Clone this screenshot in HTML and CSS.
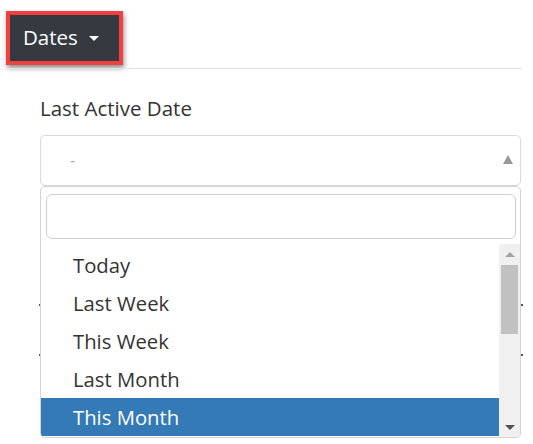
FILE: index.html
```html
<!DOCTYPE html>
<html>
<head>
<meta charset="utf-8">
<link rel="stylesheet" href="styles.css">
</head>
<body>
<div class="page">
  <div class="toolbar">
    <button class="dates-btn">Dates <span class="caret"></span></button>
  </div>
  <div class="divider"></div>
  <div class="field">
    <label class="field-label">Last Active Date</label>
    <div class="select-wrap">
      <div class="select">
        <span class="select-value">-</span>
        <span class="select-arrow"></span>
      </div>
      <div class="under">
        <div class="under-input"></div>
        <div class="under-row"><span class="tick"></span><span class="tick"></span></div>
        <div class="under-row"><span class="tick"></span><span class="tick"></span></div>
        <div class="under-bottom"><span class="vline"></span></div>
      </div>
      <div class="dropdown">
        <div class="search"><div class="search-input"></div></div>
        <div class="options">
          <ul class="list">
            <li class="opt">Today</li>
            <li class="opt">Last Week</li>
            <li class="opt">This Week</li>
            <li class="opt">Last Month</li>
            <li class="opt active">This Month</li>
          </ul>
          <div class="scrollbar">
            <span class="sb-up"></span>
            <span class="sb-thumb"></span>
            <span class="sb-fill"></span>
            <span class="sb-down"></span>
          </div>
        </div>
      </div>
    </div>
  </div>
</div>
</body>
</html>
```
FILE: styles.css
```css
* { box-sizing: border-box; }
html, body { margin: 0; padding: 0; background: #fff; }
body {
  font-family: "Open Sans", "Noto Sans", sans-serif;
  color: #333;
  width: 533px;
  height: 444px;
  overflow: hidden;
}
.page { padding: 11px 0 0 0; }
.toolbar { padding-left: 6px; height: 57px; }
.dates-btn {
  display: flex;
  align-items: center;
  width: 117px;
  height: 54px;
  border: 4px solid #f23f3f;
  background: #343a40;
  color: #fff;
  font-family: "Open Sans", sans-serif;
  font-size: 20.5px;
  padding: 0 0 3px 13px;
  margin: 0;
  box-shadow: 1px 3px 5px rgba(0,0,0,0.45);
}
.caret {
  display: inline-block;
  margin-left: 11px;
  margin-top: 3px;
  width: 0; height: 0;
  border-left: 5px solid transparent;
  border-right: 5px solid transparent;
  border-top: 5px solid #fff;
}
.divider {
  margin-left: 8px;
  width: 514px;
  height: 1px;
  background: #e3e3e3;
}
.field { padding-left: 40px; width: 521px; }
.field-label {
  display: block;
  font-size: 20.5px;
  line-height: 24px;
  margin-top: 27px;
  height: 39px;
  color: #333;
}
.select-wrap { position: relative; }
.select {
  height: 51px;
  border: 1px solid #d9d9d9;
  border-radius: 5px;
  display: flex;
  align-items: center;
  justify-content: space-between;
  padding: 0 7px 2px 29px;
}
.select-value { color: #aaa; font-size: 16px; }
.select-arrow {
  width: 0; height: 0;
  border-left: 5px solid transparent;
  border-right: 5px solid transparent;
  border-bottom: 9px solid #999;
}
.under { padding-top: 50px; }
.under-input { height: 44px; border-left: 1px solid #a8c3df; }
.under-row { height: 50px; display: flex; justify-content: space-between; align-items: center; margin-left: -1px; margin-right: -2px; }
.tick { width: 2px; height: 2px; background: #555; }
.under-bottom { height: 20px; position: relative; }
.vline { position: absolute; left: 375px; top: 0; width: 1px; height: 20px; background: #ccc; }
.dropdown {
  position: absolute;
  left: 0;
  top: 51px;
  width: 481px;
  height: 252px;
  background: #fff;
  border: 1px solid #d4d4d4;
  border-radius: 5px;
  overflow: hidden;
  display: flex;
  flex-direction: column;
}
.search { padding: 7px 4px 5px 5px; }
.search-input {
  height: 45px;
  border: 1px solid #cfcfcf;
  border-radius: 6px;
}
.options { display: flex; flex: 1; }
.list {
  list-style: none;
  margin: 0;
  padding: 2px 0 0 0;
  flex: 1;
}
.opt {
  height: 38px;
  line-height: 38px;
  padding-left: 32px;
  font-size: 20.3px;
  color: #333;
}
.opt.active { background: #337ab7; color: #fff; }
.scrollbar {
  width: 21px;
  background: #f0f0f0;
  display: flex;
  flex-direction: column;
  align-items: center;
}
.sb-up {
  margin-top: 8px;
  width: 0; height: 0;
  border-left: 5px solid transparent;
  border-right: 5px solid transparent;
  border-bottom: 5px solid #a3a3a3;
}
.sb-thumb {
  margin-top: 8px;
  width: 17px;
  height: 69px;
  background: #c1c1c1;
}
.sb-fill { flex: 1; }
.sb-down {
  margin-bottom: 7px;
  width: 0; height: 0;
  border-left: 5px solid transparent;
  border-right: 5px solid transparent;
  border-top: 5px solid #505050;
}
```
